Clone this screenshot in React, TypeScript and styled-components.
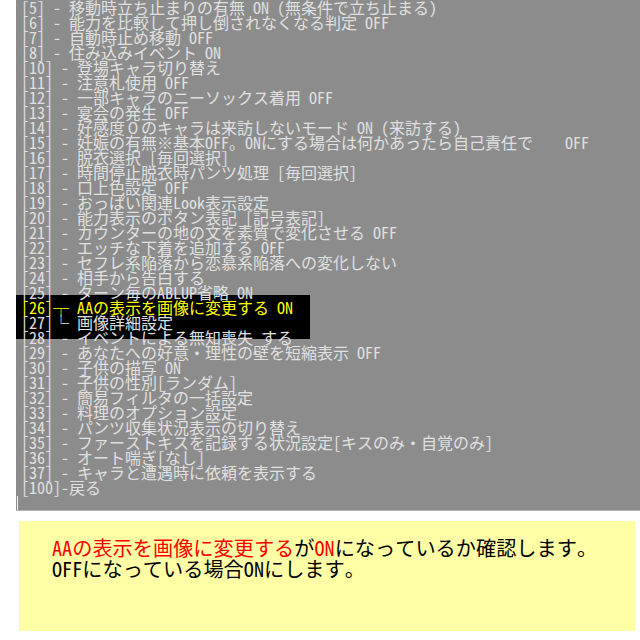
import React from 'react';
import styled, { createGlobalStyle } from 'styled-components';

const GlobalStyle = createGlobalStyle`
	html, body {
		margin: 0;
		padding: 0;
		background: #ffffff;
		overflow: hidden;
	}
`;

interface LineProps {
	$tone?: 'normal' | 'active';
}

const Page = styled.div`
	width: 640px;
	height: 640px;
	display: flex;
	flex-direction: column;
	padding-left: 16px;
	box-sizing: border-box;
`;

const Console = styled.div`
	position: relative;
	height: 510px;
	background-color: #8c8c8c;
	border-bottom: 1px solid #b4b4b4;
	padding: 0 0 0 5px;
	box-sizing: content-box;
	overflow: hidden;
	font-family: 'Noto Sans Mono CJK JP', 'MS Gothic', 'Liberation Mono', 'Noto Sans CJK JP', monospace;
	font-size: 16px;
	line-height: 15px;
`;

const Highlight = styled.div`
	position: absolute;
	top: 295px;
	left: 0;
	width: 294px;
	height: 44px;
	background-color: #000;
`;

const Caret = styled.div`
	position: absolute;
	left: 1px;
	bottom: 0;
	width: 1px;
	height: 14px;
	background-color: #f0f0f0;
`;

const Lines = styled.div`
	position: relative;
	display: flex;
	flex-direction: column;
`;

const Line = styled.div<LineProps>`
	height: 15px;
	white-space: pre;
	color: ${({ $tone }) => ($tone === 'active' ? '#ffff00' : '#e0e0e0')};
`;

const Note = styled.div`
	margin: 10px 5px 0 3px;
	height: 110px;
	background-color: #ffffa6;
	padding: 16px 0 0 33px;
	box-sizing: border-box;
	font-family: 'Noto Sans Mono CJK JP', 'Noto Sans CJK JP', sans-serif;
	font-size: 20.2px;
	line-height: 21px;
	color: #000;
`;

const Red = styled.span`
	color: #ff0000;
`;

const menu: { text: string; tone?: 'normal' | 'active' }[] = [
	{ text: '[5] - 移動時立ち止まりの有無 ON (無条件で立ち止まる)' },
	{ text: '[6] - 能力を比較して押し倒されなくなる判定 OFF' },
	{ text: '[7] - 自動時止め移動 OFF' },
	{ text: '[8] - 住み込みイベント ON' },
	{ text: '[10] - 登場キャラ切り替え' },
	{ text: '[11] - 注意札使用 OFF' },
	{ text: '[12] - 一部キャラのニーソックス着用 OFF' },
	{ text: '[13] - 宴会の発生 OFF' },
	{ text: '[14] - 好感度０のキャラは来訪しないモード ON (来訪する)' },
	{ text: '[15] - 妊娠の有無※基本OFF。ONにする場合は何かあったら自己責任で    OFF' },
	{ text: '[16] - 脱衣選択 [毎回選択]' },
	{ text: '[17] - 時間停止脱衣時パンツ処理 [毎回選択]' },
	{ text: '[18] - 口上色設定 OFF' },
	{ text: '[19] - おっぱい関連Look表示設定' },
	{ text: '[20] - 能力表示のボタン表記 [記号表記]' },
	{ text: '[21] - カウンターの地の文を素質で変化させる OFF' },
	{ text: '[22] - エッチな下着を追加する OFF' },
	{ text: '[23] - セフレ系陥落から恋慕系陥落への変化しない' },
	{ text: '[24] - 相手から告白する' },
	{ text: '[25] - ターン毎のABLUP省略 ON' },
	{ text: '[26]┬ AAの表示を画像に変更する ON', tone: 'active' },
	{ text: '[27]└ 画像詳細設定' },
	{ text: '[28] - イベントによる無知喪失 する' },
	{ text: '[29] - あなたへの好意・理性の壁を短縮表示 OFF' },
	{ text: '[30] - 子供の描写 ON' },
	{ text: '[31] - 子供の性別[ランダム]' },
	{ text: '[32] - 簡易フィルタの一括設定' },
	{ text: '[33] - 料理のオプション設定' },
	{ text: '[34] - パンツ収集状況表示の切り替え' },
	{ text: '[35] - ファーストキスを記録する状況設定[キスのみ・自覚のみ]' },
	{ text: '[36] - オート喘ぎ[なし]' },
	{ text: '[37] - キャラと遭遇時に依頼を表示する' },
	{ text: '[100]-戻る' },
];

const App: React.FC = () => {
	return (
		<>
			<GlobalStyle />
			<Page>
				<Console>
					<Highlight />
					<Lines>
						{menu.map((item) => (
							<Line key={item.text} $tone={item.tone}>
								{item.text}
							</Line>
						))}
					</Lines>
					<Caret />
				</Console>
				<Note>
					<div>
						<Red>AAの表示を画像に変更する</Red>が<Red>ON</Red>になっているか確認します。
					</div>
					<div>OFFになっている場合ONにします。</div>
				</Note>
			</Page>
		</>
	);
};

export default App;
